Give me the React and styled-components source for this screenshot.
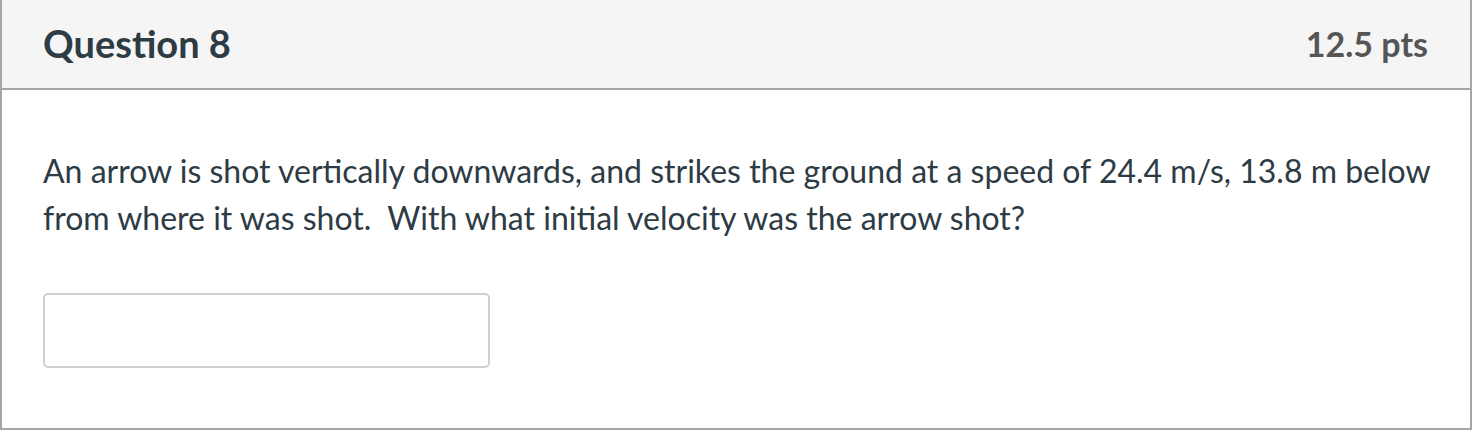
import React from "react";
import styled, { createGlobalStyle } from "styled-components";

const Global = createGlobalStyle`
  html, body { margin: 0; padding: 0; background: #fff; }
  body { font-family: Lato, "Open Sans", sans-serif; }
`;

const Panel = styled.div`
  box-sizing: border-box;
  width: 1472px;
  height: 430px;
  border: 2px solid #a5a5a5;
  border-top: none;
  background: #fff;
  display: flex;
  flex-direction: column;
`;

const Header = styled.div`
  box-sizing: border-box;
  height: 90px;
  background: #f5f5f5;
  border-bottom: 2px solid #a5a5a5;
  display: flex;
  align-items: center;
  justify-content: space-between;
  padding: 0 42px 2px 41px;
`;

const Title = styled.h2`
  margin: 0;
  font-size: 38px;
  font-weight: 700;
  color: #2d3b45;
`;

const Points = styled.span`
  font-size: 34px;
  font-weight: 700;
  color: #555;
`;

const Body = styled.div`
  padding: 57px 30px 0 41px;
`;

const Text = styled.p`
  margin: 0;
  font-size: 32px;
  line-height: 47px;
  color: #2d3b45;
  white-space: pre;
`;

const Answer = styled.input`
  box-sizing: border-box;
  display: block;
  margin-top: 52px;
  width: 447px;
  height: 75px;
  border: 2px solid #cfcfcf;
  border-radius: 5px;
  background: #fff;
  outline: none;
`;

export default function App() {
  return (
    <>
      <Global />
      <Panel>
        <Header>
          <Title>Question 8</Title>
          <Points>12.5 pts</Points>
        </Header>
        <Body>
          <Text>
            {"An arrow is shot vertically downwards, and strikes the ground at a speed of 24.4 m/s, 13.8 m below\nfrom where it was shot.  With what initial velocity was the arrow shot?"}
          </Text>
          <Answer type="text" />
        </Body>
      </Panel>
    </>
  );
}
